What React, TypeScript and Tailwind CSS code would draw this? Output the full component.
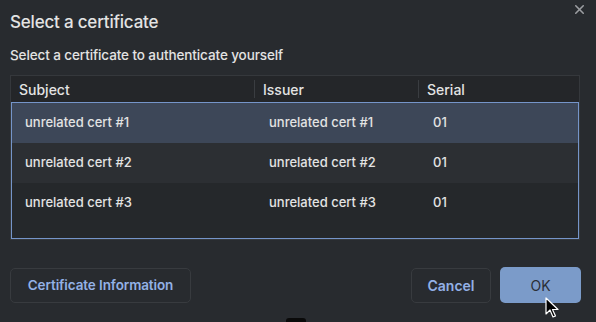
import { X } from "lucide-react";

const rows = [
  { subject: "unrelated cert #1", issuer: "unrelated cert #1", serial: "01" },
  { subject: "unrelated cert #2", issuer: "unrelated cert #2", serial: "01" },
  { subject: "unrelated cert #3", issuer: "unrelated cert #3", serial: "01" },
];

const rowBg = ["bg-[#3d4758]", "bg-[#2c2f33]", "bg-[#25282b]"];

export default function App() {
  return (
    <div className="relative w-[596px] h-[322px] overflow-hidden bg-[#282b2f] text-[#e3e3e3] font-['Inter','Liberation_Sans',Arial,sans-serif]">
      <button className="absolute right-[9px] top-[2px] text-[#9c9ea2]">
        <X size={15} strokeWidth={2.5} />
      </button>

      <div className="flex flex-col px-[10px] pt-[10px]">
        <h1 className="text-[17px] leading-[24px] font-medium tracking-[-0.2px]">Select a certificate</h1>
        <p className="mt-[12px] text-[13.5px] leading-[18px] font-medium tracking-[-0.1px]">
          Select a certificate to authenticate yourself
        </p>

        <div className="mt-[11px] w-[570px] border border-[#35383c] bg-[#242629]">
          <div className="flex h-[26px] items-center text-[14px] font-medium">
            <div className="w-[244px] pl-[8px] border-r border-[#3a3d41] h-[18px] flex items-center">Subject</div>
            <div className="w-[164px] pl-[8px] border-r border-[#3a3d41] h-[18px] flex items-center">Issuer</div>
            <div className="flex-1 pl-[8px] flex items-center">Serial</div>
          </div>
          <div className="h-[137px] border border-[#7595c9] bg-[#25282b] flex flex-col">
            {rows.map((r, i) => (
              <div key={i} className={`flex h-[40px] items-center text-[13px] font-medium ${rowBg[i]}`}>
                <div className="w-[243px] pl-[13px]">{r.subject}</div>
                <div className="w-[164px] pl-[14px]">{r.issuer}</div>
                <div className="flex-1 pl-[14px]">{r.serial}</div>
              </div>
            ))}
          </div>
        </div>

        <div className="mt-[27px] flex items-center">
          <button className="h-[35px] w-[181px] rounded-[5px] border border-[#383b3f] text-[13.5px] tracking-[-0.1px] font-semibold text-[#93b1e6]">
            Certificate Information
          </button>
          <div className="flex-1" />
          <button className="h-[35px] w-[80px] rounded-[5px] border border-[#383b3f] text-[14px] font-semibold text-[#93b1e6]">
            Cancel
          </button>
          <button className="ml-[9px] mr-[5px] h-[36px] w-[81px] rounded-[5px] bg-[#7b9bc9] text-[14px] text-[#2a2f38]">
            OK
          </button>
        </div>
      </div>

      <svg className="absolute left-[545px] top-[297px]" width="16" height="24" viewBox="0 0 16 24">
        <path d="M1 1 L1 17 L5 13 L8 20 L10.5 19 L7.5 12.5 L13 12.5 Z" fill="#000" stroke="#fff" strokeWidth="1.2" strokeLinejoin="round" />
      </svg>
      <div className="absolute left-[286px] top-[318px] h-[6px] w-[20px] rounded-full bg-[#0a0a0a]" />
    </div>
  );
}
